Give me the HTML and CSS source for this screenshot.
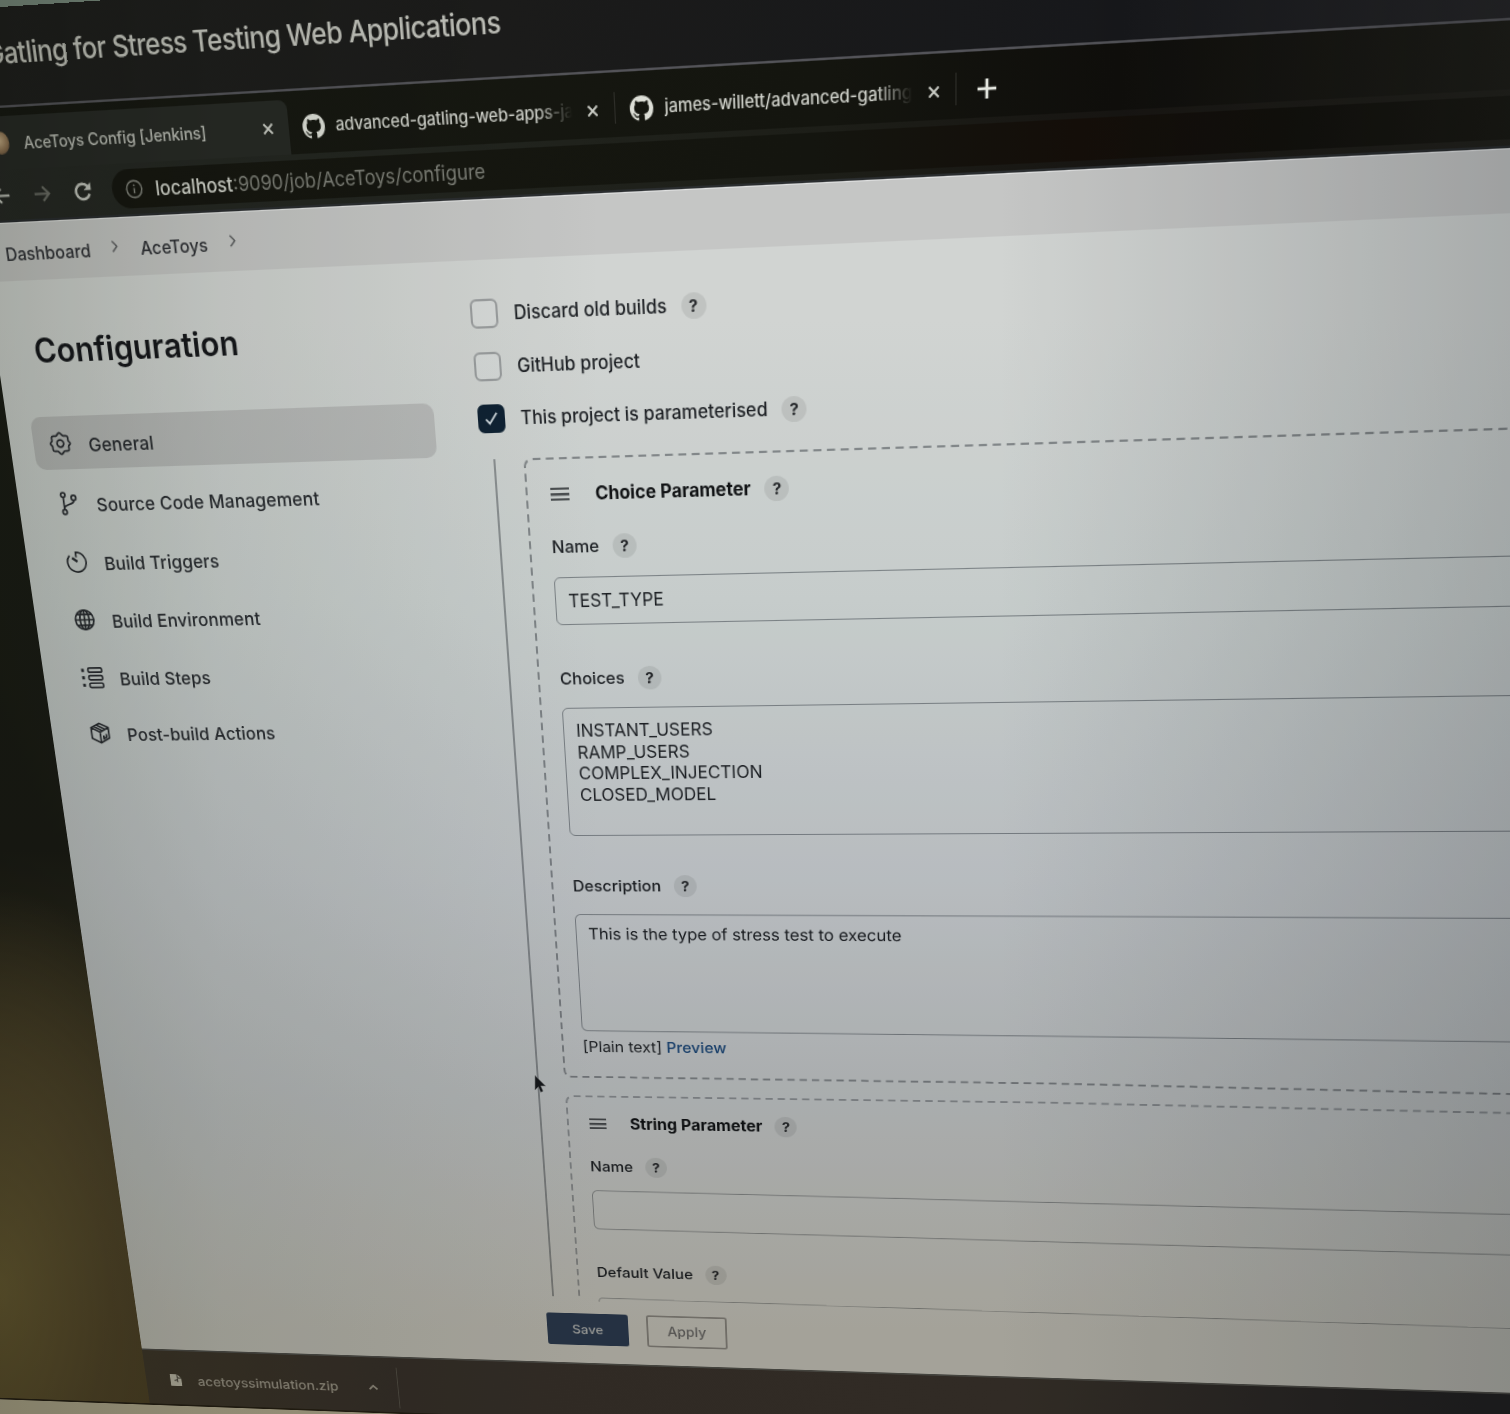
FILE: index.html
```html
<!DOCTYPE html>
<html lang="en">
<head>
<meta charset="utf-8">
<title>AceToys Config [Jenkins]</title>
<link rel="stylesheet" href="styles.css">
</head>
<body>
<svg width="0" height="0" class="defs">
  <symbol id="github" viewBox="0 0 16 16"><path d="M8 0C3.58 0 0 3.58 0 8c0 3.54 2.29 6.53 5.47 7.59.4.07.55-.17.55-.38 0-.19-.01-.82-.01-1.49-2.01.37-2.53-.49-2.69-.94-.09-.23-.48-.94-.82-1.13-.28-.15-.68-.52-.01-.53.63-.01 1.08.58 1.23.82.72 1.21 1.87.87 2.33.66.07-.52.28-.87.51-1.07-1.78-.2-3.64-.89-3.64-3.95 0-.87.31-1.59.82-2.15-.08-.2-.36-1.02.08-2.12 0 0 .67-.21 2.2.82.64-.18 1.32-.27 2-.27s1.36.09 2 .27c1.53-1.04 2.2-.82 2.2-.82.44 1.1.16 1.92.08 2.12.51.56.82 1.27.82 2.15 0 3.07-1.87 3.75-3.65 3.95.29.25.54.73.54 1.48 0 1.07-.01 1.93-.01 2.2 0 .21.15.46.55.38A8.01 8.01 0 0 0 16 8c0-4.42-3.58-8-8-8z"/></symbol>
  <symbol id="close" viewBox="0 0 12 12"><path d="M1.500 1.500l9 9M10.500 1.500l-9 9"/></symbol>
  <symbol id="chevron" viewBox="0 0 8 14"><path d="M1.500 1.500L6.500 7l-5 5.500"/></symbol>
</svg>
<div class="photo">
  <div class="screen">
    <div class="titlebar"><h1>Gatling for Stress Testing Web Applications</h1></div>

    <div class="tabs">
      <div class="tab tab-active">
        <span class="favicon"></span>
        <span class="tab-label">AceToys Config [Jenkins]</span>
        <svg class="close"><use href="#close"/></svg>
      </div>
      <div class="tab tab-second">
        <svg class="gh"><use href="#github"/></svg>
        <span class="tab-label fade">advanced-gatling-web-apps-ja</span>
        <svg class="close"><use href="#close"/></svg>
      </div>
      <div class="tab tab-third">
        <svg class="gh"><use href="#github"/></svg>
        <span class="tab-label fade">james-willett/advanced-gatling</span>
        <svg class="close"><use href="#close"/></svg>
      </div>
      <svg class="plus" viewBox="0 0 18 18"><path d="M9 1v16M1 9h16"/></svg>
    </div>

    <div class="toolbar">
      <svg class="nav" viewBox="0 0 20 20"><path d="M18 10H3M9.500 3.500L3 10l6.500 6.500"/></svg>
      <svg class="nav dim" viewBox="0 0 20 20"><path d="M2 10h15M10.500 3.500L17 10l-6.500 6.500"/></svg>
      <svg class="nav reload" viewBox="0 0 20 20"><path d="M16.500 12.200A7 7 0 1 1 15 5.100L17 7"/><path class="solid" d="M18.300 1.500v7.200h-7.200z"/></svg>
      <div class="omnibox">
        <svg class="info" viewBox="0 0 18 18"><circle cx="9" cy="9" r="7.700"/><path d="M9 8v5M9 4.800v1.600"/></svg>
        <span class="url"><b>localhost</b>:9090/job/AceToys/configure</span>
      </div>
    </div>

    <nav class="crumbs">
      <span>Dashboard</span><svg><use href="#chevron"/></svg><span>AceToys</span><svg><use href="#chevron"/></svg>
    </nav>

    <div class="page">
      <aside>
        <h2>Configuration</h2>
        <ul>
          <li class="on"><svg viewBox="0 0 24 24"><path d="M12 1.500c1.600 0 2.200 2.300 3.600 2.900s3.400-.5 4.500.6 0 3.100.6 4.500 1.800 1.300 1.800 2.500-1.400 1.300-1.900 2.600.6 3.300-.5 4.400-3.100 0-4.500.6S13.500 22.500 12 22.500s-2.200-2.300-3.600-2.900-3.400.5-4.500-.6 0-3.100-.6-4.500S1.500 13.300 1.500 12s1.400-1.300 1.900-2.600-.6-3.300.5-4.400 3.100 0 4.500-.6 2-2.900 3.600-2.900z"/><circle cx="12" cy="12" r="3.500"/></svg><span>General</span></li>
          <li><svg viewBox="0 0 24 24"><circle cx="7" cy="3.500" r="2.300"/><circle cx="7" cy="20.500" r="2.300"/><circle cx="18" cy="6.500" r="2.500"/><path d="M7 6v12M18 9c0 5-11 3-11 8"/></svg><span>Source Code Management</span></li>
          <li><svg viewBox="0 0 24 24"><path d="M5 5a10 10 0 1 0 7-3v5"/><path d="M7.500 7.500l5.500 4" class="thick"/></svg><span>Build Triggers</span></li>
          <li><svg viewBox="0 0 24 24"><circle cx="12" cy="12" r="10"/><ellipse cx="12" cy="12" rx="5" ry="10"/><path d="M2 12h20M12 2v20M4 6.500h16M4 17.500h16"/></svg><span>Build Environment</span></li>
          <li><svg viewBox="0 0 24 24"><rect x="8" y="2" width="15" height="4.500" rx="1.500"/><rect x="8" y="10" width="15" height="4.500" rx="1.500"/><rect x="8" y="18" width="15" height="4.500" rx="1.500"/><path class="dots" d="M2 2.700v3.200M2 10.500v3.200M2 18.500v3.200"/></svg><span>Build Steps</span></li>
          <li><svg viewBox="0 0 24 24"><path d="M12 1.500l9.500 4.500v11.500L12 22.500 2.500 17.500V6zM2.500 6l9.500 5 9.500-5M12 11v11.500M5.500 4.600l9.500 5M8.500 3.200l9.500 5M15.500 14.500v3.500l3-1.500V13"/></svg><span>Post-build Actions</span></li>
        </ul>
      </aside>

      <main>
        <div class="scroll">
          <label class="check"><i></i><span>Discard old builds</span><em>?</em></label>
          <label class="check"><i></i><span>GitHub project</span></label>
          <label class="check"><i class="checked"><svg viewBox="0 0 16 16"><path d="M2 8.500L6 13l8-11"/></svg></i><span>This project is parameterised</span><em>?</em></label>

          <div class="params">
            <section class="card">
              <svg class="dashes"><path d="M1100 1H9Q1 1 1 9V621Q1 629 9 629L500 630L1100 637"/></svg>
              <header><i class="grip"></i><span>Choice Parameter</span><em>?</em></header>
              <h3 class="f-name"><span>Name</span><em>?</em></h3>
              <div class="input">TEST_TYPE</div>
              <h3 class="f-choices"><span>Choices</span><em>?</em></h3>
              <div class="input choices">INSTANT_USERS<br>RAMP_USERS<br>COMPLEX_INJECTION<br>CLOSED_MODEL</div>
              <h3 class="f-desc"><span>Description</span><em>?</em></h3>
              <div class="input desc">This is the type of stress test to execute</div>
              <p>[Plain text] <a>Preview</a></p>
            </section>
            <section class="card second">
              <svg class="dashes"><path d="M1100 7L500 1H9Q1 1 1 9V236"/></svg>
              <header><i class="grip"></i><span>String Parameter</span><em>?</em></header>
              <h3 class="f-name"><span>Name</span><em>?</em></h3>
              <div class="input tilt"></div>
              <h3 class="f-default"><span>Default Value</span><em>?</em></h3>
              <div class="input tilt cut"></div>
            </section>
          </div>
        </div>
        <footer><button class="save">Save</button><button class="apply">Apply</button></footer>
      </main>
    </div>

    <div class="downloads">
      <svg class="file" viewBox="0 0 16 18"><path d="M1 1h9l5 5v11H1z"/><path class="fold" d="M10 1v5h5M6 10l4-2v4"/></svg>
      <span>acetoyssimulation.zip</span>
      <svg class="caret" viewBox="0 0 12 8"><path d="M1.500 6.500L6 2l4.500 4.500"/></svg>
    </div>
    <div class="bezel"></div>
  </div>
  <div class="shade"></div>
  <svg class="cursor" viewBox="0 0 12 19"><path d="M1 1v14.500l3.400-3.200 2.300 5.400 2.400-1-2.300-5.300H11.500z"/></svg>
</div>
</body>
</html>
```
FILE: styles.css
```css
* { box-sizing: border-box; }

body {
  margin: 0;
  width: 1510px;
  height: 1414px;
  overflow: hidden;
  font-family: Inter, "Liberation Sans", sans-serif;
  font-size: 16px;
  color: #1d2024;
}

.defs { position: absolute; }
svg { fill: none; stroke: currentColor; flex: none; overflow: visible; }
h1, h2, h3, p, ul { margin: 0; padding: 0; font-weight: 500; font-size: 16px; }
span, a { white-space: nowrap; }
ul { list-style: none; }
em, i { font-style: normal; flex: none; }

.photo {
  position: relative;
  width: 1510px;
  height: 1414px;
  overflow: hidden;
  background:
    radial-gradient(ellipse 220px 400px at 0 1290px, #776a3c 0, #5c5030 50%, transparent 100%),
    linear-gradient(#75867a 0, #75867a 60px, #1b1f15 120px, #1d1e16 850px, #37321f 1050px, #4c412a 1250px, #4f4527);
}

/* the monitor, seen from the right and slightly above */
.screen {
  width: 1600px;
  transform-origin: 0 0;
  transform:
    matrix3d(1.002672, -0.0660826, 0, -0.0000733108, 0.160877502, 1.16850677, 0, 0.000170498844, 0, 0, 1, 0, -22, 224, 0, 1)
    translateY(-183px);
}

.titlebar {
  height: 84px;
  background: linear-gradient(90deg, #1f201d, #1b1b1a 500px, #17181b 1050px, #2f2f31 1550px);
  border-bottom: 2px solid #535358;
}
.titlebar h1 {
  width: 513px;
  padding-top: 22px;
  line-height: 32px;
  font-size: 24.500px;
  letter-spacing: -.580px;
  text-align: right;
  color: #c0c1ba;
  white-space: nowrap;
}

.tabs {
  display: flex;
  align-items: flex-end;
  height: 53px;
  background: linear-gradient(90deg, #171912, #14150f 800px, #0f0e0b 1050px, #262721 1550px);
  color: #ced0c9;
}
.tab { display: flex; align-items: center; height: 46px; }
.tab-active { width: 311px; padding-left: 25px; background: #272a25; border-radius: 0 8px 0 0; }
.tab-second { width: 301px; padding-left: 13px; }
.tab-third { width: 300px; padding-left: 13px; }
.tab-second, .tab-third { background: linear-gradient(#2e2e29, #2e2e29) right 9px / 1px 26px no-repeat; }
.favicon { width: 17px; height: 20px; margin-right: 14px; border-radius: 50%; background: radial-gradient(circle at 40% 40%, #c9b08a, #8a6f50 60%, #4b3c30); }
.tab-label { width: 219px; overflow: hidden; font-size: 14.800px; font-weight: 500; letter-spacing: -.100px; }
.tab-active .tab-label { width: 229px; color: #b9bbb4; font-size: 14.700px; letter-spacing: -.130px; padding-top: 2px; }
.gh { width: 21px; height: 21px; margin-right: 10px; fill: #dcded6; stroke: none; }
.fade { -webkit-mask-image: linear-gradient(90deg, #000 185px, transparent 218px); mask-image: linear-gradient(90deg, #000 185px, transparent 218px); }
.close { width: 11px; height: 11px; stroke-width: 2; margin-left: 12px; }
.tab-active .close { margin-left: 1px; }
.plus { width: 18px; height: 18px; margin: 0 0 14px 17px; stroke-width: 2.600; color: #e4e6df; }

.toolbar {
  display: flex;
  align-items: center;
  height: 46px;
  padding-left: 18px;
  color: #c2c4bd;
  background: linear-gradient(90deg, #272a25, #22251f 400px, #1d1e18 800px, #171512 1050px, #292a24 1550px);
  border-bottom: 2px solid #2a2d2f;
}
.nav { width: 19px; height: 19px; margin-right: 21px; stroke-width: 2.200; }
.dim { color: #6b6d66; }
.nav.reload { stroke-width: 2.600; margin-right: 19px; }
.solid { fill: currentColor; stroke: none; }
.omnibox {
  display: flex;
  align-items: center;
  flex: 1;
  height: 34px;
  padding-left: 13px;
  border-radius: 17px 0 0 17px;
  background: linear-gradient(90deg, #161710, #14150f 650px, #140e09 880px, #11100c 1050px, #21221c 1400px);
}
.info { width: 17px; height: 17px; margin-right: 12px; stroke-width: 1.500; color: #83857d; }
.url { font-size: 17.200px; color: #7d7f77; }
.url b { font-weight: 500; color: #d3d5cd; }

.crumbs {
  display: flex;
  align-items: center;
  height: 52px;
  padding: 2px 0 0 23px;
  background: #c5c6c5;
  border-top: 1px solid #dfe0e0;
  color: #303236;
  font-size: 16.200px;
  font-weight: 500;
}
.crumbs svg { width: 7px; height: 13px; margin: 0 21px 4px; stroke-width: 1.600; color: #5d5f60; }

.page { display: flex; height: 1146px; background: #d1d4d2; }
aside { width: 467px; }
h2 { margin: 46px 0 0 38px; height: 36px; line-height: 36px; font-size: 30.600px; font-weight: 600; color: #16181b; }
aside ul { display: flex; flex-direction: column; gap: 7.300px; margin: 43px 42px 0 24px; }
aside li { display: flex; align-items: center; height: 50px; padding-left: 16px; border-radius: 10px; color: #2a2d31; font-size: 17.500px; font-weight: 500; letter-spacing: .120px; }
aside li svg { width: 23px; height: 23px; margin-right: 17px; stroke-width: 1.800; }
aside li span { padding-top: 4px; }
.on { background: #babbba; }
.thick { stroke-width: 2.600; }
.dots { stroke-width: 3; }

main { flex: 1; font-weight: 500; }
.scroll { height: 1066px; padding-top: 34px; }
.check { display: flex; align-items: center; height: 26px; margin-bottom: 21px; font-size: 16.700px; }
.check > i { width: 26px; height: 26px; margin-right: 15px; border: 2px solid #9a9d9e; border-radius: 6px; background: #d5d8d7; }
.check > i.checked { display: grid; place-items: center; background: #0f2233; border-color: #0f2233; }
.checked svg { width: 14px; height: 14px; stroke: #dfe6ea; stroke-width: 1.800; }
em {
  display: grid;
  place-items: center;
  width: 23px;
  height: 23px;
  margin-left: 13px;
  border-radius: 50%;
  background: #c0c3c1;
  font-size: 15px;
  font-weight: 700;
  color: #26282b;
}

.params { margin: 24px 0 0 12px; padding-left: 27px; border-left: 2px solid #8d9192; height: 887px; }
.card { position: relative; height: 630px; padding: 22px 0 0 22px; }
.second { margin-top: 20px; padding-top: 20px; height: 237px; }
.dashes { position: absolute; left: 0; top: 0; width: 100%; height: 100%; stroke: #85898b; stroke-width: 2; stroke-dasharray: 7.500 5.100; }
.second .dashes { stroke: #94989a; }
header { display: flex; align-items: center; height: 24px; font-size: 16.900px; font-weight: 700; color: #101214; }
.grip { width: 18px; height: 12px; margin: 0 25px 0 2px; border: solid #4d5052; border-width: 2.500px 0; background: linear-gradient(#4d5052, #4d5052) 0 2.500px / 100% 2.500px no-repeat; }
header em, h3 em { margin-left: 13px; }
h3 { display: flex; align-items: center; height: 24px; font-size: 16.400px; }
.f-name { margin: 25px 0 17px; }
.f-choices { margin: 40px 0 17px; }
.f-desc { margin: 40px 0 18px; }
.second .f-name { margin: 25px 0 16px; }
.f-default { margin: 39px 0 19px; }
.input { height: 46px; line-height: 45px; padding-left: 12px; border: 1.500px solid #82878a; border-radius: 6px; font-size: 17px; font-weight: 400; white-space: nowrap; }
.choices { height: 130px; padding-top: 12px; line-height: 21.700px; }
.desc { height: 127px; padding-top: 10px; line-height: 21.700px; font-size: 16.800px; transform: skewY(.180deg); transform-origin: 0 0; }
.tilt { transform: skewY(.350deg); transform-origin: 0 0; }
.second .input { border-color: #8a8e8f; }
.input.cut { height: 5px; border-bottom: 0; border-radius: 6px 6px 0 0; }
.card p { margin-top: 7px; line-height: 20px; font-size: 16.400px; font-weight: 400; }
.card a { color: #1c4a7c; font-weight: 500; }

footer { display: flex; gap: 20px; padding: 19px 0 0 4px; }
button { height: 39px; font: 500 14.700px Inter, sans-serif; border-radius: 3px; padding: 0; }
.save { width: 90px; background: #2f405a; border: 0; color: #bcc2c8; }
.apply { width: 88px; background: transparent; border: 2px solid #8f8f8d; color: #6f7072; font-size: 15.300px; }

.downloads {
  display: flex;
  align-items: center;
  height: 71px;
  padding: 6px 0 0 28px;
  background:
    linear-gradient(#5c5a52, #5c5a52) 295px 12px / 1px 52px no-repeat,
    linear-gradient(90deg, #463f31, #3d3731 300px, #3e3832 1000px, #28282b 1450px);
  border-top: 2px solid #575855;
  font-size: 16px;
  font-weight: 500;
  letter-spacing: -.050px;
  color: #a9a69c;
}
.file { width: 15px; height: 17px; margin-right: 18px; fill: #cfcec2; stroke: none; }
.fold { stroke: #55524a; stroke-width: 1.500; }
.caret { width: 12px; height: 8px; margin-left: 35px; stroke-width: 2; }
.bezel { height: 120px; margin-left: -400px; background: #c5c0a8; border-top: 2px solid #2a2417; }

/* uneven brightness across the panel */
.shade {
  position: absolute;
  inset: 0;
  mix-blend-mode: multiply;
  background:
    linear-gradient(90deg, rgba(120, 124, 112, .37), rgba(140, 144, 134, .2) 220px, rgba(255, 255, 255, 0) 600px, rgba(255, 255, 255, 0) 1000px, rgba(110, 114, 118, .34) 1510px),
    linear-gradient(#fff 320px, #f2f6f7 600px, #e0e2e8 880px, #cfd0d3 1100px, #c8c3ba 1330px);
}
.cursor { position: absolute; left: 534px; top: 1074px; width: 12px; height: 20px; fill: #15171a; stroke: #6d7070; stroke-width: .6; }
```
